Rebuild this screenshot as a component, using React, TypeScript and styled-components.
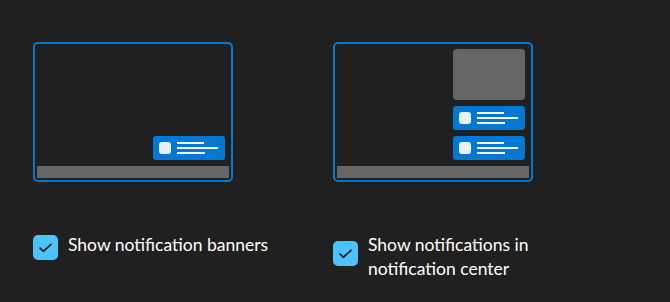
import styled, { createGlobalStyle } from "styled-components";

const GlobalStyle = createGlobalStyle`
  html, body {
    margin: 0;
    background: #202020;
  }
  body {
    font-family: "Segoe UI", Lato, "Noto Sans", sans-serif;
    color: #ffffff;
  }
`;

const Page = styled.div`
  display: grid;
  grid-template-columns: 300px 300px;
  padding: 42px 0 0 33px;
  height: 302px;
  box-sizing: border-box;
`;

const Option = styled.div`
  display: flex;
  flex-direction: column;
  gap: 51px;
`;

const Preview = styled.div`
  width: 200px;
  height: 140px;
  box-sizing: border-box;
  border: 2px solid #0078d4;
  border-radius: 5px;
  padding: 2px;
  display: flex;
  flex-direction: column;
  justify-content: flex-end;
  gap: 6px;
`;

const Stack = styled.div`
  display: flex;
  flex-direction: column;
  align-items: flex-end;
  gap: 6px;
  padding-right: 4px;
`;

const Center = styled.div`
  width: 72px;
  height: 51px;
  border-radius: 4px;
  background: #666666;
`;

const Banner = styled.div`
  width: 72px;
  height: 24px;
  box-sizing: border-box;
  border-radius: 3px;
  background: #0078d4;
  display: flex;
  align-items: center;
  gap: 6px;
  padding-left: 6px;
`;

const AppIcon = styled.div`
  width: 12px;
  height: 12px;
  border-radius: 3px;
  background: #e5f1fb;
`;

const Lines = styled.div`
  display: flex;
  flex-direction: column;
  gap: 3px;
`;

const Line = styled.div<{ $w: number }>`
  width: ${(p) => p.$w}px;
  height: 2px;
  background: #f2f8fd;
`;

const Taskbar = styled.div`
  height: 12px;
  background: #666666;
`;

const Row = styled.label`
  display: flex;
  align-items: flex-start;
  gap: 10px;
`;

const Box = styled.span<{ $top: number }>`
  flex: none;
  width: 25px;
  height: 25px;
  margin-top: ${(p) => p.$top}px;
  border-radius: 5px;
  background: #4cc2ff;
  display: flex;
  align-items: center;
  justify-content: center;
`;

const Label = styled.span`
  font-size: 17.5px;
  line-height: 24px;
  max-width: 215px;
`;

const Notification = () => (
  <Banner>
    <AppIcon />
    <Lines>
      <Line $w={27} />
      <Line $w={41} />
      <Line $w={28} />
    </Lines>
  </Banner>
);

const Check = ({ top, children }: { top: number; children: string }) => (
  <Row>
    <Box $top={top}>
      <svg width="25" height="25" viewBox="0 0 25 25">
        <path d="M7 13 L10.3 16.3 L18 9.3" fill="none" stroke="#111" strokeWidth="1.6" strokeLinecap="round" strokeLinejoin="round" />
      </svg>
    </Box>
    <Label>{children}</Label>
  </Row>
);

export default function App() {
  return (
    <>
      <GlobalStyle />
      <Page>
        <Option>
          <Preview>
            <Stack>
              <Notification />
            </Stack>
            <Taskbar />
          </Preview>
          <Check top={2}>Show notification banners</Check>
        </Option>
        <Option>
          <Preview>
            <Stack>
              <Center />
              <Notification />
              <Notification />
            </Stack>
            <Taskbar />
          </Preview>
          <Check top={8}>Show notifications in notification center</Check>
        </Option>
      </Page>
    </>
  );
}
